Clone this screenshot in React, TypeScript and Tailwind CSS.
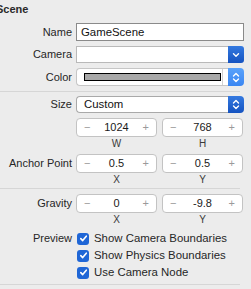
import React from "react";

function Label({ children }: { children: React.ReactNode }) {
  return <div className="w-[72px] shrink-0 text-right">{children}</div>;
}

function UpDown({ className }: { className?: string }) {
  return (
    <svg width="8" height="11" viewBox="0 0 8 11" className={className}>
      <path d="M1.5 4 L4 1.5 L6.5 4" fill="none" stroke="white" strokeWidth="1.4" strokeLinecap="round" strokeLinejoin="round" />
      <path d="M1.5 7 L4 9.5 L6.5 7" fill="none" stroke="white" strokeWidth="1.4" strokeLinecap="round" strokeLinejoin="round" />
    </svg>
  );
}

function Stepper({ value, caption }: { value: string; caption: string }) {
  return (
    <div className="flex w-[81px] flex-col items-center">
      <div className="flex h-[19px] w-full items-center justify-between rounded-[4px] border border-[#c3c3c3] bg-white px-[7px]">
        <span className="text-[#9a9a9a]">−</span>
        <span className="text-[#1a1a1a]">{value}</span>
        <span className="text-[#9a9a9a]">+</span>
      </div>
      <div className="mt-[1px] text-[10px] leading-[12px] text-[#3a3a3a]">{caption}</div>
    </div>
  );
}

function Check({ text }: { text: string }) {
  return (
    <div className="flex items-center">
      <div className="flex h-[12px] w-[12px] items-center justify-center rounded-[3px] bg-[#1f66d6]">
        <svg width="9" height="9" viewBox="0 0 9 9">
          <path d="M1.8 4.6 L3.7 6.6 L7.3 2.2" fill="none" stroke="white" strokeWidth="1.6" strokeLinecap="round" strokeLinejoin="round" />
        </svg>
      </div>
      <span className="ml-[5px] text-[11.4px]">{text}</span>
    </div>
  );
}

export default function App() {
  return (
    <div className="h-[289px] w-[251px] overflow-hidden bg-[#ececec] text-[11px] leading-[13px] text-[#262626] [font-family:'Liberation_Sans',Arial,sans-serif]">
      {/* header */}
      <div className="-ml-[4px] pt-[3px] text-[11px] font-bold text-[#2a2a2a]">Scene</div>

      {/* name / camera / color */}
      <div className="mt-[7px] flex flex-col gap-[5px]">
        <div className="flex items-center">
          <Label>Name</Label>
          <div className="ml-[4px] flex h-[18px] w-[168px] items-center border border-[#8a8a8a] bg-white px-[4px] text-[11.4px] text-[#111]">
            GameScene
          </div>
        </div>
        <div className="flex items-center">
          <Label>Camera</Label>
          <div className="ml-[4px] flex h-[17px] w-[168px] items-stretch">
            <div className="flex-1 border border-r-0 border-[#b9b9b9] bg-white" />
            <div className="flex w-[16px] items-center justify-center rounded-r-[3px] bg-gradient-to-b from-[#3479e0] to-[#1553c0]">
              <svg width="8" height="6" viewBox="0 0 8 6">
                <path d="M1.5 1.8 L4 4.2 L6.5 1.8" fill="none" stroke="white" strokeWidth="1.4" strokeLinecap="round" strokeLinejoin="round" />
              </svg>
            </div>
          </div>
        </div>
        <div className="flex items-center">
          <Label>Color</Label>
          <div className="ml-[4px] flex h-[18px] w-[168px] items-stretch">
            <div className="flex flex-1 items-center rounded-l-[4px] border border-r-0 border-[#c6c6c6] bg-white pl-[7px] pr-[5px]">
              <div className="h-[8px] w-[137px] border border-black bg-[#a8a8a8]" />
              <div className="ml-auto h-full w-px bg-[#d2d2d2]" />
            </div>
            <div className="flex w-[16px] items-center justify-center rounded-r-[4px] bg-gradient-to-b from-[#5aa2fb] to-[#3a86f2]">
              <UpDown />
            </div>
          </div>
        </div>
      </div>

      <div className="mt-[5px] h-px w-[240px] bg-[#d6d6d6]" />

      {/* size */}
      <div className="mt-[4px] flex items-center">
        <Label>Size</Label>
        <div className="ml-[4px] flex h-[17px] w-[168px] items-stretch">
          <div className="flex flex-1 items-center rounded-l-[4px] border border-r-0 border-[#a9a9a9] bg-white pl-[7px] text-[11.4px] text-[#111]">
            Custom
          </div>
          <div className="flex w-[16px] items-center justify-center rounded-r-[4px] bg-gradient-to-b from-[#3479e0] to-[#1553c0]">
            <UpDown />
          </div>
        </div>
      </div>

      <div className="mt-[5px] flex items-start">
        <Label>{""}</Label>
        <div className="ml-[4px] flex gap-[5px]">
          <Stepper value="1024" caption="W" />
          <Stepper value="768" caption="H" />
        </div>
      </div>

      <div className="mt-[4px] flex items-start">
        <div className="flex h-[19px] items-center">
          <Label>Anchor Point</Label>
        </div>
        <div className="ml-[4px] flex gap-[5px]">
          <Stepper value="0.5" caption="X" />
          <Stepper value="0.5" caption="Y" />
        </div>
      </div>

      <div className="mt-[2px] h-px w-[240px] bg-[#d6d6d6]" />

      {/* gravity */}
      <div className="mt-[5px] flex items-start">
        <div className="flex h-[19px] items-center">
          <Label>Gravity</Label>
        </div>
        <div className="ml-[4px] flex gap-[5px]">
          <Stepper value="0" caption="X" />
          <Stepper value="-9.8" caption="Y" />
        </div>
      </div>

      {/* preview */}
      <div className="mt-[6px] flex items-start">
        <div className="flex h-[13px] items-center">
          <Label>Preview</Label>
        </div>
        <div className="ml-[5px] flex flex-col gap-[4px]">
          <Check text="Show Camera Boundaries" />
          <Check text="Show Physics Boundaries" />
          <Check text="Use Camera Node" />
        </div>
      </div>

      <div className="mt-[5px] h-px w-[240px] bg-[#d6d6d6]" />
    </div>
  );
}
